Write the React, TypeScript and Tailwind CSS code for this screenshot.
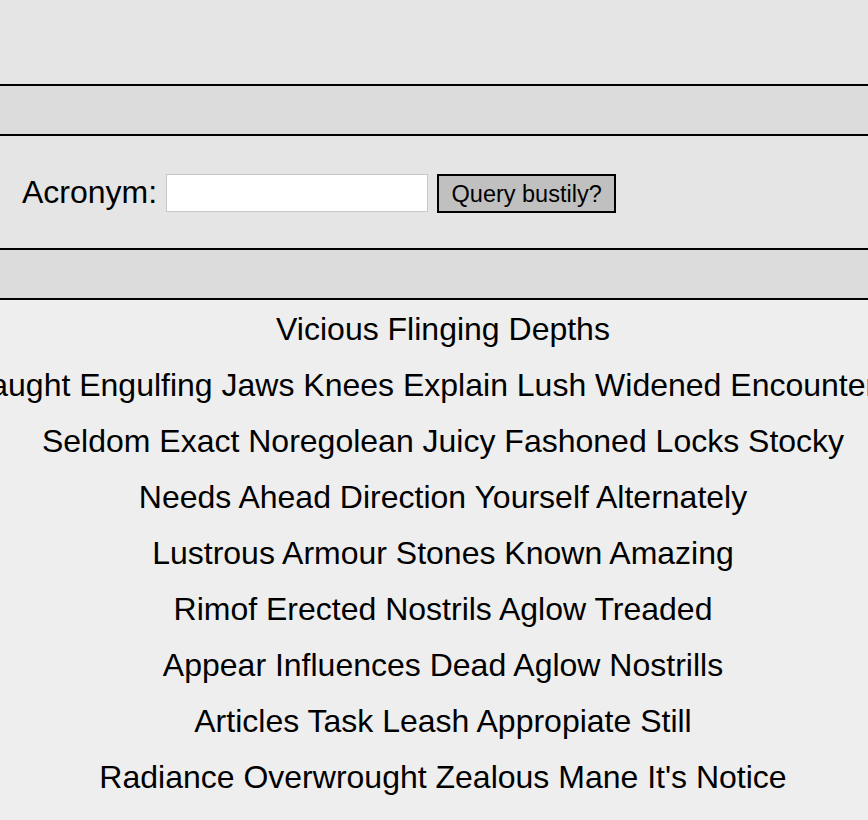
export default function App() {
  const lines = [
    "Vicious Flinging Depths",
    "Caught Engulfing Jaws Knees Explain Lush Widened Encountering",
    "Seldom Exact Noregolean Juicy Fashoned Locks Stocky",
    "Needs Ahead Direction Yourself Alternately",
    "Lustrous Armour Stones Known Amazing",
    "Rimof Erected Nostrils Aglow Treaded",
    "Appear Influences Dead Aglow Nostrills",
    "Articles Task Leash Appropiate Still",
    "Radiance Overwrought Zealous Mane It's Notice",
  ];

  return (
    <div className="min-h-screen w-full overflow-hidden bg-[#eeeeee] font-['Liberation_Sans',Arial,sans-serif] text-black">
      {/* Header area */}
      <div className="h-[84px] bg-[#e5e5e5]" />
      <div className="h-[52px] border-y-2 border-black bg-[#dcdcdc]" />

      {/* Search form */}
      <div className="flex h-[112px] items-center bg-[#e5e5e5] pl-[22px]">
        <label className="text-[32px] leading-none">Acronym:</label>
        <input
          type="text"
          className="ml-[9px] mt-[1px] h-[38px] w-[262px] border border-[#c8c8c8] bg-white px-1 text-[20px] outline-none"
        />
        <button className="ml-[9px] mt-[3px] h-[39px] w-[179px] border-2 border-black bg-[#c0c0c0] pt-[3px] text-[23.5px] leading-none">
          Query bustily?
        </button>
      </div>
      <div className="h-[52px] border-y-2 border-black bg-[#dcdcdc]" />

      {/* Results */}
      <div className="flex flex-col items-center pl-[18px] pt-[1px]">
        {lines.map((line) => (
          <div key={line} className="whitespace-nowrap text-[32px] leading-[56px]">
            {line}
          </div>
        ))}
      </div>
    </div>
  );
}
